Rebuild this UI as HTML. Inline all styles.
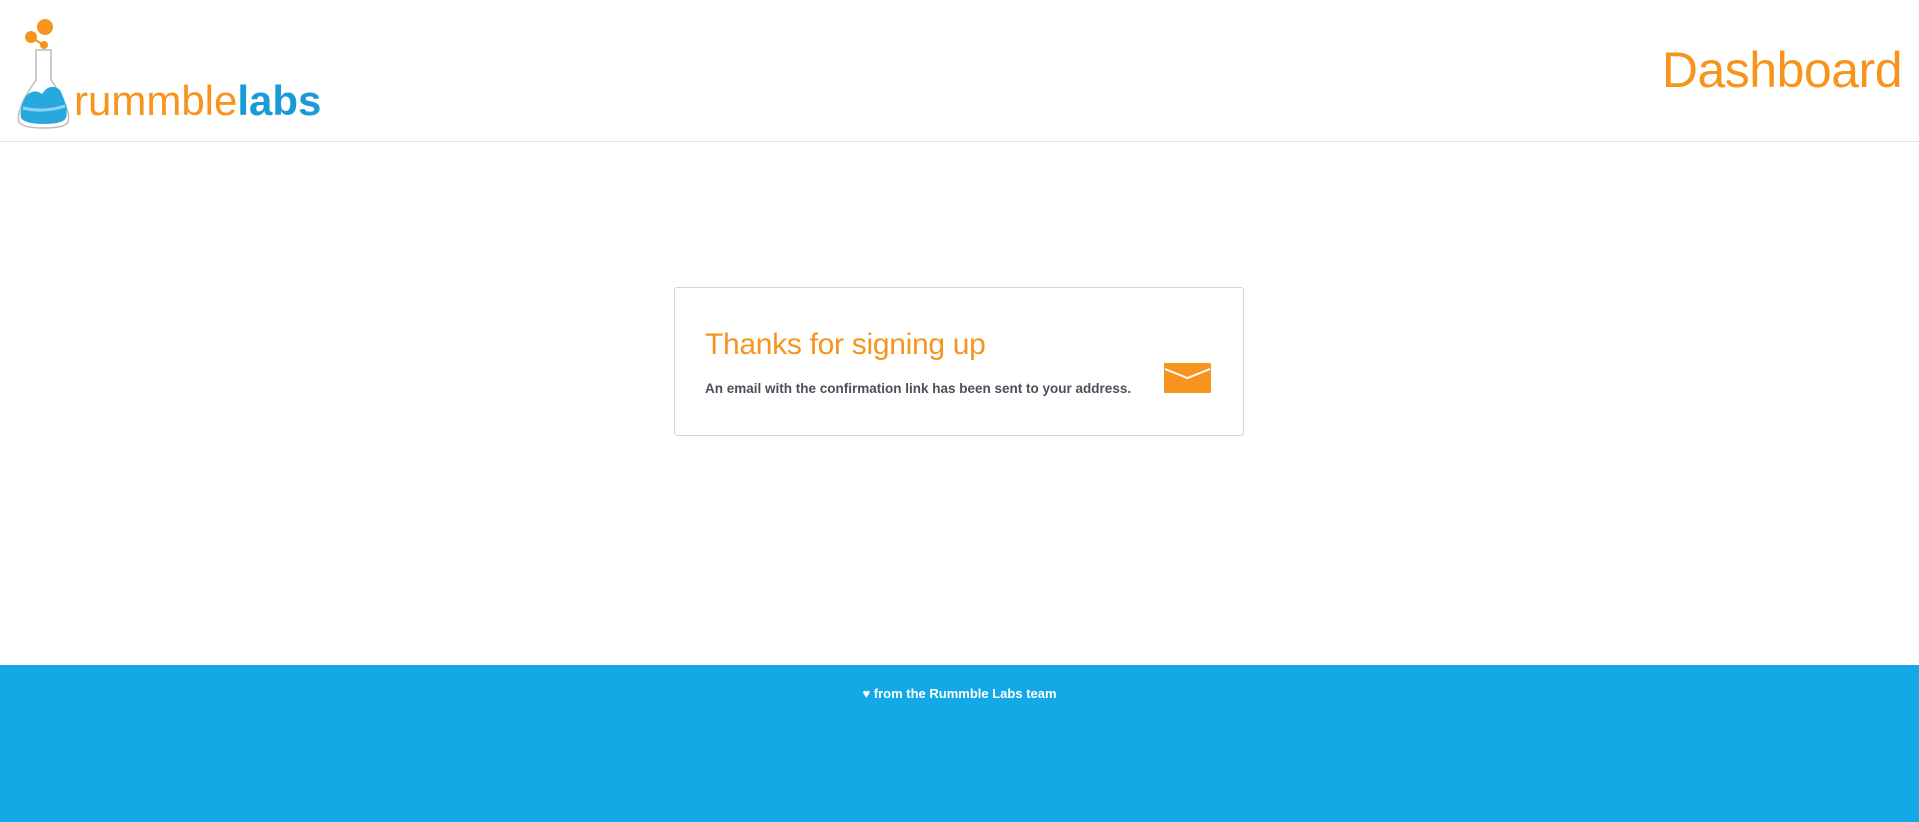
<!DOCTYPE html>
<html><head><meta charset="utf-8"><style>
*{margin:0;padding:0;box-sizing:border-box}
body{width:1919px;height:822px;background:#fff;font-family:"Liberation Sans",sans-serif;position:relative;overflow:hidden}
.hdr{position:absolute;left:0;top:0;width:1919px;height:142px;border-bottom:1px solid #e3e3e3}
.dash{position:absolute;right:17px;top:41px;font-size:50px;color:#f7941d;font-weight:300;letter-spacing:-0.5px}
.logo{position:absolute;left:74px;top:80px;font-size:42px;line-height:1}
.card{position:absolute;left:674px;top:287px;width:570px;height:149px;border:1px solid #d6d6d6;border-radius:3px}
.card h1{position:absolute;left:30px;top:40px;font-size:30px;font-weight:normal;color:#f7941d;letter-spacing:-0.3px}
.card p{position:absolute;left:30px;top:93px;font-size:13.5px;font-weight:bold;color:#4a4f5a}
.foot{position:absolute;left:0;top:665px;width:1919px;height:157px;background:#12a9e6}
.foot div{position:absolute;left:0;width:100%;top:21px;text-align:center;color:#fff;font-weight:bold;font-size:13px}
</style></head><body>
<div class="hdr">
<svg style="position:absolute;left:14px;top:18px" width="60" height="114" viewBox="0 0 60 114">
<circle cx="31" cy="9" r="8" fill="#f7941d"/><circle cx="17" cy="19" r="6" fill="#f7941d"/><circle cx="30" cy="27" r="4" fill="#f7941d"/>
<path d="M20 21 L28 26" stroke="#f7941d" stroke-width="2"/>
<path d="M22 32 L37 32 L37 62 Q58 92 54 104 Q51 110 30 110 Q9 110 5 104 Q1 92 22 62 Z" fill="#fff" stroke="#bbb" stroke-width="1.5"/>
<path d="M12 78 Q20 70 28 76 Q36 64 46 72 Q55 90 52 100 Q49 106 30 106 Q11 106 7 100 Q5 90 12 78 Z" fill="#29a8e0"/>
<path d="M9 90 Q30 95 51 88" stroke="#8fd3f2" stroke-width="3" fill="none"/>
</svg>
<div class="logo"><span style="color:#f7941d">rummble</span><span style="color:#1a9ad6;font-weight:bold">labs</span></div>
<div class="dash">Dashboard</div>
</div>
<div class="card">
<h1>Thanks for signing up</h1>
<p>An email with the confirmation link has been sent to your address.</p>
<svg style="position:absolute;left:489px;top:75px" width="47" height="30" viewBox="0 0 47 30"><rect width="47" height="30" rx="1" fill="#f7941d"/><path d="M1 6 L23.5 15 L46 6" stroke="#fff" stroke-width="2" fill="none"/></svg>
</div>
<div class="foot"><div>&#9829; from the Rummble Labs team</div></div>
</body></html>
